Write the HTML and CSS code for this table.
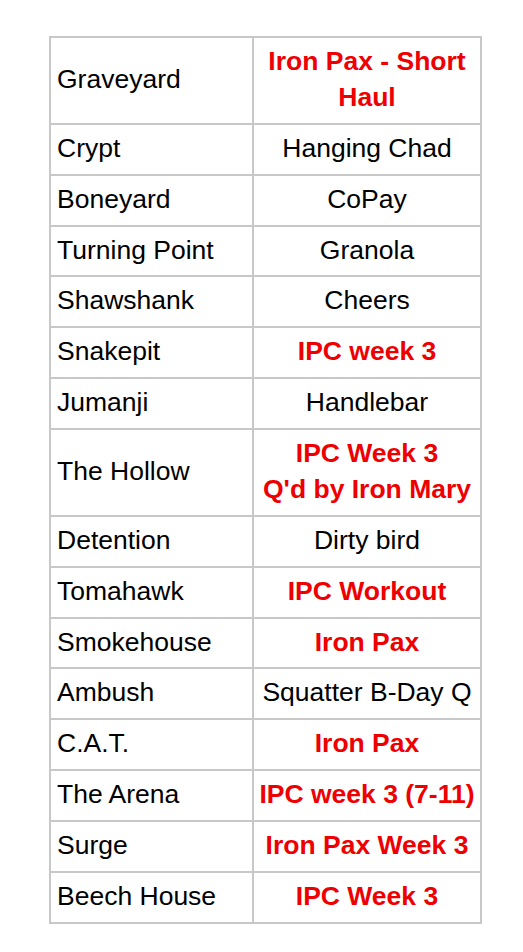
FILE: index.html
```html
<!DOCTYPE html>
<html lang="en">
<head>
<meta charset="utf-8">
<title>Workout schedule</title>
<link rel="stylesheet" href="styles.css">
</head>
<body>
<table class="schedule">
  <tbody>
    <tr><td class="ao">Graveyard</td><td class="q hot">Iron Pax - Short Haul</td></tr>
    <tr><td class="ao">Crypt</td><td class="q">Hanging Chad</td></tr>
    <tr><td class="ao">Boneyard</td><td class="q">CoPay</td></tr>
    <tr><td class="ao">Turning Point</td><td class="q">Granola</td></tr>
    <tr><td class="ao">Shawshank</td><td class="q">Cheers</td></tr>
    <tr><td class="ao">Snakepit</td><td class="q hot">IPC week 3</td></tr>
    <tr><td class="ao">Jumanji</td><td class="q">Handlebar</td></tr>
    <tr><td class="ao">The Hollow</td><td class="q hot">IPC Week 3<br>Q'd by Iron Mary</td></tr>
    <tr><td class="ao">Detention</td><td class="q">Dirty bird</td></tr>
    <tr><td class="ao">Tomahawk</td><td class="q hot">IPC Workout</td></tr>
    <tr><td class="ao">Smokehouse</td><td class="q hot">Iron Pax</td></tr>
    <tr><td class="ao">Ambush</td><td class="q">Squatter B-Day Q</td></tr>
    <tr><td class="ao">C.A.T.</td><td class="q hot">Iron Pax</td></tr>
    <tr><td class="ao">The Arena</td><td class="q hot nowrap">IPC week 3 (7-11)</td></tr>
    <tr><td class="ao">Surge</td><td class="q hot nowrap">Iron Pax Week 3</td></tr>
    <tr><td class="ao">Beech House</td><td class="q hot">IPC Week 3</td></tr>
  </tbody>
</table>
</body>
</html>
```

FILE: styles.css
```css
html, body {
  margin: 0;
  padding: 0;
  background: #ffffff;
}

body {
  font-family: "Liberation Sans", Arial, sans-serif;
  font-size: 26.5px;
  line-height: 36px;
  color: #000000;
}

.schedule {
  box-sizing: border-box;
  width: 433px;
  margin: 36px 0 0 49px;
  border-collapse: separate;
  border-spacing: 0;
  table-layout: fixed;
  border-top: 2px solid #c8c8c8;
  border-left: 2px solid #c8c8c8;
}

.schedule td {
  box-sizing: border-box;
  border-right: 2px solid #c8c8c8;
  border-bottom: 2px solid #c8c8c8;
  padding: 5px 6px 7.87px;
  vertical-align: middle;
}

.ao {
  width: 203px;
  text-align: left;
}

.schedule td.q {
  width: 228px;
  text-align: center;
  padding-left: 3px;
  padding-right: 3px;
}

.hot {
  color: #ee0000;
  font-weight: bold;
}

.nowrap {
  white-space: nowrap;
}
```
